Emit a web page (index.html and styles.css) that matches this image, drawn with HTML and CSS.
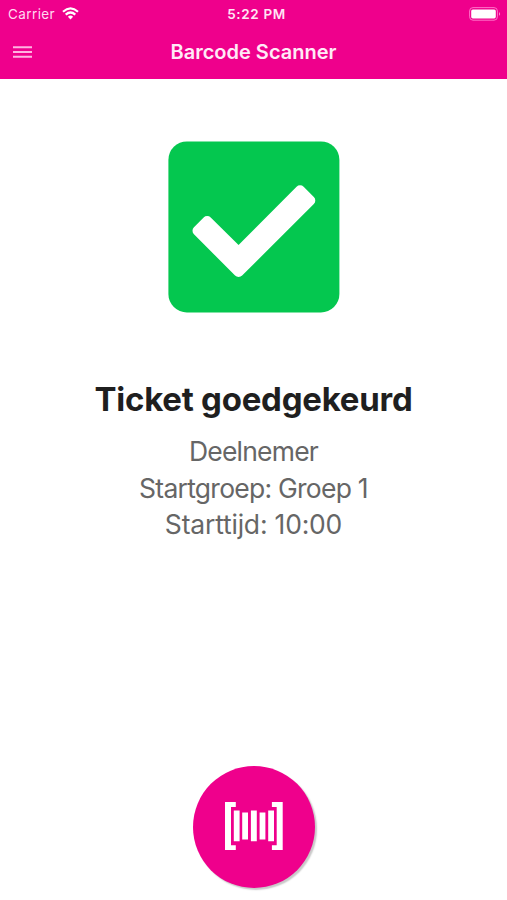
FILE: index.html
```html
<!DOCTYPE html>
<html lang="nl">
<head>
<meta charset="utf-8">
<title>Barcode Scanner</title>
<link rel="stylesheet" href="styles.css">
</head>
<body>
<div class="app">
  <header class="header">
    <div class="status">
      <div class="network"><span class="carrier">Carrier</span>
        <svg class="wifi" width="17" height="13" viewBox="0 0 17 13"><g fill="none" stroke="#fff" stroke-width="2.2"><path d="M1 4.7Q8.5-2 16 4.7"/><path d="M3.7 7.6Q8.5 3.4 13.3 7.6"/></g><path d="M5.9 9.7Q8.5 7.5 11.1 9.7L8.5 12.4Z" fill="#fff"/></svg>
      </div>
      <span class="clock">5:22 PM</span>
      <svg class="battery" width="32" height="14" viewBox="0 0 32 14"><rect x=".6" y=".6" width="27.8" height="12.6" rx="3.4" fill="none" stroke="#ff70c8" stroke-width="1"/><rect x="2.2" y="2.4" width="24.6" height="9" rx="1.6" fill="#fff"/><path d="M30 5q2.2 1.9 0 3.8z" fill="#ff8ad2"/></svg>
    </div>
    <div class="toolbar">
      <svg class="menu" width="19" height="13" viewBox="0 0 19 13"><path d="M0 1.3h19M0 6h19M0 10.7h19" stroke="#ffb3e1" stroke-width="1.9"/></svg>
      <h1 class="title">Barcode Scanner</h1>
    </div>
  </header>
  <main class="result">
    <svg class="check" width="172" height="172" viewBox="168 141 172 172"><rect x="168.4" y="141.4" width="171" height="171" rx="18.5" fill="#04c74f"/><path d="M197.5 230.7L207.2 221L238.6 252L300.1 190.3L310.3 200.5L238.6 272Z" fill="#fff" stroke="#fff" stroke-width="10" stroke-linejoin="round"/></svg>
    <h2 class="heading">Ticket goedgekeurd</h2>
    <p class="line role">Deelnemer</p>
    <p class="line group">Startgroep: Groep 1</p>
    <p class="line time">Starttijd: 10:00</p>
  </main>
  <footer class="footer">
    <button class="scan" aria-label="Scan">
      <svg width="58" height="49" viewBox="0 0 58 49" fill="#fff"><path d="M0 0h10.8v4.9H6v38.3h4.8V48H0zM57.7 0H46.9v4.9h4.8v38.3h-4.8V48h10.8zM8.8 8.6h5.8v30.7H8.8zM17.2 10.6h5.8v26.8h-5.8zM25.9 8.6h5.9v30.7h-5.9zM34.6 10.6h5.8v26.8h-5.8zM43.2 8.6H49v30.7h-5.8z"/></svg>
    </button>
  </footer>
</div>
</body>
</html>
```
FILE: styles.css
```css
* { box-sizing: border-box; }
body { margin: 0; background: #fff; font-family: Inter, "Liberation Sans", sans-serif; }
.app { height: 900px; display: flex; flex-direction: column; overflow: hidden; }
.header { height: 79px; flex: none; background: #ef008c; color: #fff; }
.status { height: 27px; padding: 0 6px 0 8px; display: grid; grid-template-columns: 1fr auto 1fr; align-items: center; }
.network { display: flex; align-items: center; gap: 7px; }
.carrier { font-size: 13.5px; letter-spacing: .4px; color: #ffd9f0; }
.clock { padding-left: 4px; font-size: 13.5px; font-weight: 600; letter-spacing: .65px; color: #ffe5f5; }
.battery { justify-self: end; }
.toolbar { height: 50px; padding: 0 13px; display: grid; grid-template-columns: 19px 1fr 19px; align-items: center; }
.title { margin: 0; text-align: center; font-size: 20px; line-height: 24px; font-weight: 600; color: #ffeaf7; }
.result { flex: 1; padding-top: 62px; display: flex; flex-direction: column; align-items: center; }
.check { display: block; }
.heading { margin: 64px 0 12px; font-size: 33px; line-height: 44px; font-weight: 700; letter-spacing: -.25px; color: #1f1f1f; white-space: nowrap; }
.line { margin: 0; font-size: 26.5px; line-height: 36.5px; color: #666; white-space: nowrap; }
.role { letter-spacing: -.8px; }
.group { letter-spacing: -.75px; }
.time { letter-spacing: -.2px; }
.footer { height: 134px; flex: none; display: flex; justify-content: center; align-items: flex-start; }
.scan { width: 122px; height: 122px; padding: 0 0 2px; border: 0; border-radius: 50%; background: #ef008c; box-shadow: 2px 2px 1.5px #c8c8c8; display: flex; align-items: center; justify-content: center; }
```
